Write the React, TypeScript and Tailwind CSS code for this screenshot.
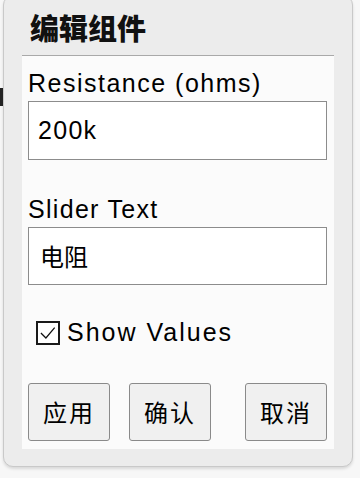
export default function App() {
  const font = { fontFamily: '"Liberation Sans", "Noto Sans CJK SC", sans-serif' }
  const cjk = { fontFamily: '"Noto Sans CJK SC", sans-serif' }
  return (
    <div className="relative h-[478px] w-[360px] overflow-hidden bg-[#f7f7f7] text-black" style={font}>
      {/* little dark mark at the left edge */}
      <div className="absolute left-0 top-[88px] h-[18px] w-[3px] bg-[#222]" />

      <div className="ml-[3px] mt-[-5px] h-[472px] w-[350px] rounded-[10px] border border-[#c9c9c9] bg-[#ececec] pl-[18px] shadow-[0_2px_3px_rgba(0,0,0,0.12)]">
        <div className="flex h-[59px] items-center pt-[4px]">
          <h1 className="pl-[8px] text-[29px] font-black leading-none text-[#111]" style={cjk}>
            编辑组件
          </h1>
        </div>

        <div className="flex h-[394px] w-[312px] flex-col border-t border-[#a9a9a9] bg-[#fbfbfb] pl-[6px] pr-[7px]">
          <label className="mt-[12px] text-[25px] leading-[30px] tracking-[1.5px]">Resistance (ohms)</label>
          <div className="mt-[3px] flex h-[59px] items-center border border-[#8c8c8c] bg-white pl-[9px] text-[25px] tracking-[1.3px]">
            200k
          </div>

          <label className="mt-[34px] text-[25px] leading-[30px] tracking-[1.3px]">Slider Text</label>
          <div className="mt-[3px] flex h-[58px] items-center border border-[#8c8c8c] bg-white pl-[11px] text-[24px]" style={cjk}>
            电阻
          </div>

          <div className="mt-[35px] flex items-center pl-[8px]">
            <span className="flex h-[24px] w-[24px] items-center justify-center border-2 border-[#1a1a1a] bg-white">
              <svg viewBox="0 0 24 24" className="h-[20px] w-[20px]" fill="none" stroke="#111" strokeWidth="1.5">
                <path d="M3.5 12 L9.5 18 L20 5.5" />
              </svg>
            </span>
            <span className="ml-[7px] text-[25px] leading-none tracking-[2px]">Show Values</span>
          </div>

          <div className="mt-[38px] flex">
            {['应用', '确认'].map((t) => (
              <button
                key={t}
                className="mr-[19px] flex h-[58px] w-[82px] items-center justify-center rounded-[3px] border border-[#8a8a8a] bg-[#f0f0f0] text-[24px] tracking-[2px]"
                style={cjk}
              >
                {t}
              </button>
            ))}
            <button
              className="ml-auto flex h-[58px] w-[82px] items-center justify-center rounded-[3px] border border-[#8a8a8a] bg-[#f0f0f0] text-[24px] tracking-[2px]"
              style={cjk}
            >
              取消
            </button>
          </div>
        </div>
      </div>
    </div>
  )
}
